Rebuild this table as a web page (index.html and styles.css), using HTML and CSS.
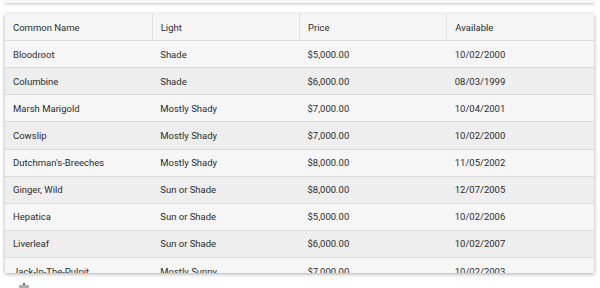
FILE: index.html
```html
<!DOCTYPE html>
<html>
<head>
<meta charset="utf-8">
<link rel="stylesheet" href="styles.css">
</head>
<body>
<div class="page">
  <div class="top-card"></div>
  <div class="grid-card">
    <table class="grid">
      <thead>
        <tr><th>Common Name</th><th>Light</th><th>Price</th><th>Available</th></tr>
      </thead>
      <tbody>
        <tr><td>Bloodroot</td><td>Shade</td><td>$5,000.00</td><td>10/02/2000</td></tr>
        <tr><td>Columbine</td><td>Shade</td><td>$6,000.00</td><td>08/03/1999</td></tr>
        <tr><td>Marsh Marigold</td><td>Mostly Shady</td><td>$7,000.00</td><td>10/04/2001</td></tr>
        <tr><td>Cowslip</td><td>Mostly Shady</td><td>$7,000.00</td><td>10/02/2000</td></tr>
        <tr><td>Dutchman's-Breeches</td><td>Mostly Shady</td><td>$8,000.00</td><td>11/05/2002</td></tr>
        <tr><td>Ginger, Wild</td><td>Sun or Shade</td><td>$8,000.00</td><td>12/07/2005</td></tr>
        <tr><td>Hepatica</td><td>Sun or Shade</td><td>$5,000.00</td><td>10/02/2006</td></tr>
        <tr><td>Liverleaf</td><td>Sun or Shade</td><td>$6,000.00</td><td>10/02/2007</td></tr>
        <tr><td>Jack-In-The-Pulpit</td><td>Mostly Sunny</td><td>$7,000.00</td><td>10/02/2003</td></tr>
      </tbody>
    </table>
  </div>
  <div class="footer-mark"><span class="dot-top"></span><span class="dot-row"></span></div>
</div>
</body>
</html>
```
FILE: styles.css
```css
html, body {
  margin: 0;
  padding: 0;
  background: #ffffff;
}
.page {
  padding: 0 6px 0 5px;
  font-family: Roboto, "Liberation Sans", sans-serif;
  color: #2b2b2b;
}
.top-card {
  height: 3px;
  background: #f7f7f7;
  box-shadow: 0 1px 3px rgba(0,0,0,0.25);
}
.grid-card {
  margin-top: 11px;
  height: 259px;
  overflow: hidden;
  background: #f6f5f6;
  box-shadow: 0 1px 4px rgba(0,0,0,0.35);
}
.grid {
  width: 100%;
  border-collapse: collapse;
  table-layout: fixed;
  font-size: 9.5px;
}
.grid th, .grid td {
  height: 26.13px;
  padding: 0 0 0 8px;
  text-align: left;
  font-weight: 400;
  white-space: nowrap;
  border-bottom: 1px solid #dcdbdc;
}
.grid th {
  background: #f6f5f6;
  border-right: 1px solid #e2e1e2;
  height: 26px;
}
.grid th:last-child {
  border-right: none;
}
.grid tbody tr:nth-child(odd) {
  background: #f7f6f7;
}
.grid tbody tr:nth-child(even) {
  background: #efeeef;
}
.footer-mark {
  position: relative;
  height: 15px;
  margin-left: 13px;
}
.dot-top {
  position: absolute;
  left: 5px;
  top: 10px;
  width: 2px;
  height: 2px;
  background: #666;
}
.dot-row {
  position: absolute;
  left: 1px;
  top: 12px;
  width: 10px;
  height: 3px;
  background: #888;
  opacity: 0.7;
}
```
